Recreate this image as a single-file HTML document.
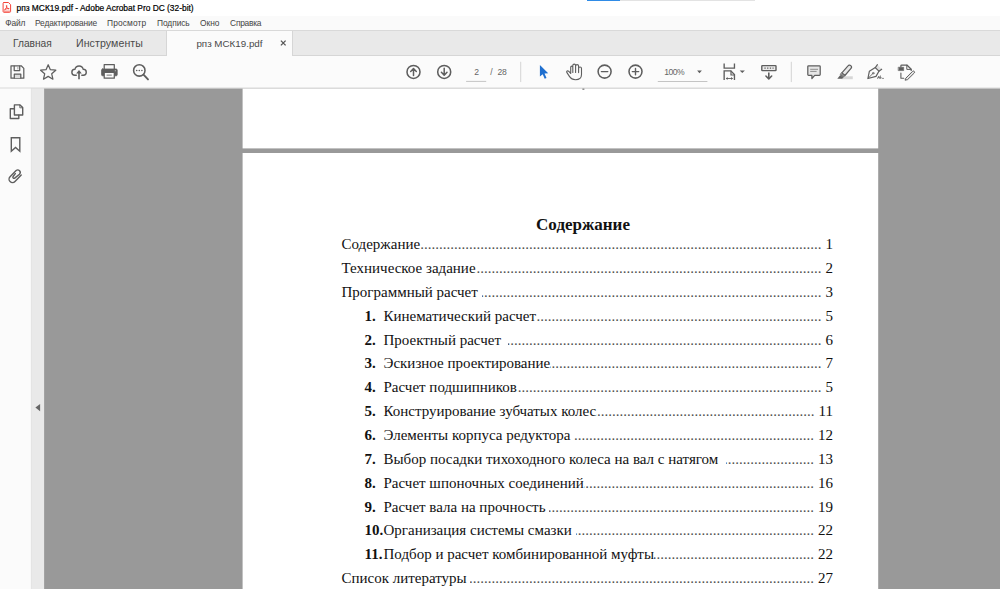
<!DOCTYPE html>
<html><head><meta charset="utf-8">
<style>
*{box-sizing:border-box;margin:0;padding:0}
html,body{width:1000px;height:589px;overflow:hidden;background:#fff}
body{position:relative;font-family:"Liberation Sans",sans-serif;color:#333}
.abs{position:absolute}
#title{left:0;top:0;width:1000px;height:16px;background:#fff}
#title .t{position:absolute;left:16.5px;top:0.9px;font-size:8.4px;line-height:14px;color:#000;white-space:nowrap;-webkit-text-stroke:0.2px #000}
#strip{left:587px;top:0;width:168px;height:1px;background:#e3e3e3}
#strip b{display:block;width:33px;height:1px;background:#2f8be6}
#menu{left:0;top:16px;width:1000px;height:14px;background:#fafafa}
#menu span{position:absolute;top:0px;font-size:8.4px;line-height:14px;color:#444;white-space:nowrap}
#tabs{left:0;top:30px;width:1000px;height:26px;background:#e9e9e9;border-top:1px solid #d9d9d9;border-bottom:1px solid #d6d6d6}
#tabs .act{position:absolute;left:166px;top:0;width:127px;height:25px;background:#fbfbfb;border-left:1px solid #d6d6d6;border-right:1px solid #d6d6d6}
#tabs span{position:absolute;top:6px;font-size:10.2px;line-height:12px;color:#4a4a4a;white-space:nowrap}
#tool{left:0;top:56px;width:1000px;height:32px;background:#fbfbfb}
#side{left:0;top:89px;width:31px;height:500px;background:#fbfbfb}
#sideb{left:31px;top:89px;width:1px;height:500px;background:#d4d4d4}
#strip2{left:32px;top:89px;width:12px;height:500px;background:#e9e9e9}
#doc{left:44px;top:89px;width:956px;height:500px;background:#999}
#p1{left:243px;top:89px;width:635px;height:60px;background:#fff}
#p2{left:243px;top:153px;width:635px;height:436px;background:#fff}
.serif{font-family:"Liberation Serif",serif;color:#111}
#h{left:536.1px;top:216.2px;font-weight:bold;font-size:17px;line-height:17px;white-space:nowrap}
.ln{position:absolute;white-space:pre;left:341.5px;width:491.5px;height:18px;font-size:15px;line-height:18px;display:flex}
.ln.i{left:364.5px;width:468.5px}
.ln b{display:inline-block;width:19px}
.ln .d{flex:1;overflow:hidden;direction:rtl;letter-spacing:0;color:#505050}
.ln .n{padding-left:4px}
.tt{font-size:8.6px;line-height:12px;color:#666;white-space:nowrap}
</style></head><body>
<div id="title" class="abs"><span class="t">рпз МСК19.pdf - Adobe Acrobat Pro DC (32-bit)</span></div>
<div id="strip" class="abs"><b></b></div>
<div id="menu" class="abs">
<span style="left:5.2px;letter-spacing:-0.1px">Файл</span><span style="left:35px;letter-spacing:-0.13px">Редактирование</span><span style="left:107.1px;letter-spacing:0.12px">Просмотр</span><span style="left:157px;letter-spacing:-0.07px">Подпись</span><span style="left:200px">Окно</span><span style="left:230.1px;letter-spacing:-0.25px">Справка</span>
</div>
<div id="tabs" class="abs"><div class="act"></div>
<span style="left:13px;top:6.67px;font-size:10.2px">Главная</span><span style="left:76px;top:5.7px;font-size:10.6px;letter-spacing:0.08px">Инструменты</span><span style="left:196.4px;top:6.8px;font-size:9.8px">рпз МСК19.pdf</span>
</div>
<div id="tool" class="abs"></div>
<svg class="abs" style="left:0;top:0" width="1000" height="589" viewBox="0 0 1000 589" shape-rendering="geometricPrecision">
<rect x="0" y="88" width="31" height="501" fill="#fbfbfb"/>
<rect x="30.9" y="88" width="0.9" height="501" fill="#dcdcdc"/>
<rect x="31.8" y="88" width="12.4" height="501" fill="#e9e9e9"/>
<rect x="0" y="87.5" width="1000" height="1" fill="#dadada"/>
<rect x="44.1" y="88.5" width="956" height="501" fill="#999"/>
<rect x="242.6" y="88.6" width="635.6" height="59.8" fill="#fff"/>
<rect x="242.6" y="153" width="635.6" height="436" fill="#fff"/>
</svg>
<div id="h" class="abs serif">Содержание</div>
<div id="toc" class="serif">
<div class="ln" style="top:234.90px"><span>Содержание</span><span class="d">........................................................................................................................................................................................................</span><span class="n">1</span></div>
<div class="ln" style="top:258.78px"><span>Техническое задание</span><span class="d">........................................................................................................................................................................................................</span><span class="n">2</span></div>
<div class="ln" style="top:282.66px"><span>Программный расчет </span><span class="d">........................................................................................................................................................................................................</span><span class="n">3</span></div>
<div class="ln i" style="top:306.54px"><b>1.</b><span>Кинематический расчет</span><span class="d">........................................................................................................................................................................................................</span><span class="n">5</span></div>
<div class="ln i" style="top:330.9px"><b>2.</b><span>Проектный расчет&nbsp;&nbsp;</span><span class="d">........................................................................................................................................................................................................</span><span class="n">6</span></div>
<div class="ln i" style="top:354.30px"><b>3.</b><span>Эскизное проектирование</span><span class="d">........................................................................................................................................................................................................</span><span class="n">7</span></div>
<div class="ln i" style="top:378.18px"><b>4.</b><span>Расчет подшипников</span><span class="d">........................................................................................................................................................................................................</span><span class="n">5</span></div>
<div class="ln i" style="top:402.06px"><b>5.</b><span>Конструирование зубчатых колес</span><span class="d">........................................................................................................................................................................................................</span><span class="n">11</span></div>
<div class="ln i" style="top:425.94px"><b>6.</b><span>Элементы корпуса редуктора </span><span class="d">........................................................................................................................................................................................................</span><span class="n">12</span></div>
<div class="ln i" style="top:449.82px"><b>7.</b><span>Выбор посадки тихоходного колеса на вал с натягом&nbsp;&nbsp;</span><span class="d">........................................................................................................................................................................................................</span><span class="n">13</span></div>
<div class="ln i" style="top:473.70px"><b>8.</b><span>Расчет шпоночных соединений</span><span class="d">........................................................................................................................................................................................................</span><span class="n">16</span></div>
<div class="ln i" style="top:497.58px"><b>9.</b><span>Расчет вала на прочность </span><span class="d">........................................................................................................................................................................................................</span><span class="n">19</span></div>
<div class="ln i" style="top:521.46px"><b>10.</b><span>Организация системы смазки </span><span class="d">........................................................................................................................................................................................................</span><span class="n">22</span></div>
<div class="ln i" style="top:545.34px"><b>11.</b><span>Подбор и расчет комбинированной муфты</span><span class="d">........................................................................................................................................................................................................</span><span class="n">22</span></div>
<div class="ln" style="top:569.22px"><span>Список литературы </span><span class="d">........................................................................................................................................................................................................</span><span class="n">27</span></div>
</div>

<svg class="abs" id="ic" style="left:0;top:0" width="1000" height="589" viewBox="0 0 1000 589" fill="none" stroke="#5e5e5e" stroke-width="1.25" stroke-linejoin="round" stroke-linecap="round">
<!-- pdf title icon -->
<path d="M4 2.5 H8.5 L10.6 4.7 V11.4 A0.9 0.9 0 0 1 9.7 12.3 H4 A0.9 0.9 0 0 1 3.1 11.4 V3.4 A0.9 0.9 0 0 1 4 2.5 Z" fill="#fff" stroke="#f4443a" stroke-width="1"/>
<path d="M3.6 10.6 H10.1 V11.8 H3.6Z" fill="#f7837b" stroke="none"/>
<path d="M4.8 9.6 C6.2 8.6 7 6.9 6.8 5.6 C6.5 4.9 6.1 5.7 6.5 6.7 C7 7.9 8 8.8 9 9 C9.5 9 9.2 8.4 8.3 8.5 C7.1 8.6 5.8 9 4.8 9.6Z" stroke="#f02d22" stroke-width="0.8"/>
<!-- save -->
<path d="M11 65.8 H21.2 L23.8 68.4 V78.2 H11 Z"/>
<path d="M14.2 66 V70.5 H19.7 V66"/>
<path d="M17.9 67.2 V69" stroke="#999" stroke-width="0.9"/>
<path d="M14.3 78 V74.2 H20.8 V78" fill="#dcdcdc"/>
<!-- star -->
<path d="M48.20 64.70 L50.37 69.71 L55.81 70.23 L51.72 73.84 L52.90 79.17 L48.20 76.40 L43.50 79.17 L44.68 73.84 L40.59 70.23 L46.03 69.71Z"/>
<!-- cloud upload -->
<path d="M76.3 75.3 H74.8 A3 3 0 0 1 74.9 69.3 A4.3 4.3 0 0 1 83.25 69.3 A3 3 0 0 1 83.3 75.3 H81.8" stroke-width="1.4"/>
<path d="M79 79.3 V72.6" stroke-width="1.6" stroke-linecap="butt"/><path d="M76.2 73.5 L79 70 L81.8 73.5Z" fill="#5e5e5e" stroke="none"/>
<!-- printer -->
<path d="M104.2 69 V64.6 H114.3 V69" />
<rect x="101.6" y="69" width="15.6" height="6.8" rx="1" fill="#5e5e5e" stroke-width="0.8"/>
<rect x="104.2" y="72.4" width="10.1" height="5.8" fill="#fbfbfb"/>
<rect x="106.6" y="74.4" width="5.2" height="1.6" fill="#aaa" stroke="none"/>
<circle cx="115.3" cy="70.7" r="0.55" fill="#ddd" stroke="none"/>
<!-- zoom -->
<circle cx="139.3" cy="70.4" r="5.7" stroke-width="1.55"/>
<path d="M143.5 74.7 L148 79.4" stroke-width="1.9"/>
<g fill="#5e5e5e" stroke="none"><circle cx="136.7" cy="70.5" r="0.8"/><circle cx="139.3" cy="70.5" r="0.8"/><circle cx="141.9" cy="70.5" r="0.8"/></g>
<!-- up / down -->
<circle cx="413.5" cy="71.9" r="6.5" stroke-width="1.55"/>
<path d="M413.5 75.6 V68.7 M410.7 71.5 L413.5 68.6 L416.3 71.5" stroke-width="1.5"/>
<circle cx="444.2" cy="71.9" r="6.5" stroke-width="1.55"/>
<path d="M444.2 68.2 V75.1 M441.4 72.3 L444.2 75.2 L447 72.3" stroke-width="1.5"/>
<!-- page underline, dividers -->
<path d="M466.5 81.4 H485.8" stroke="#c4c4c4" stroke-width="1"/>
<path d="M520.7 62.2 V81.7" stroke="#d4d4d4" stroke-width="1"/>
<path d="M791.3 62.2 V81.7" stroke="#d4d4d4" stroke-width="1"/>
<path d="M658.2 81.5 H707" stroke="#c4c4c4" stroke-width="1"/>
<!-- cursor -->
<path d="M539.9 64.9 V76.6 L542.7 74.2 L544.7 78.7 L546.5 77.9 L544.5 73.5 L548.2 73.3 Z" fill="#1f6fcf" stroke="none"/>
<!-- hand -->
<path d="M570.7 73.4 V67.2 A1.05 1.05 0 0 1 572.8 67.2 V72.4 M572.8 67 V65.5 A1.4 1.4 0 0 1 575.6 65.5 V72.4 M575.6 66.1 A1.5 1.5 0 0 1 578.6 66.1 V72.6 M578.6 68.5 A1.45 1.45 0 0 1 581.5 68.5 V74.5 C581.5 78 579 79.7 575.5 79.7 C572.5 79.7 570.8 78.6 569.4 76.4 L566.8 72.4 C566.2 71.2 567.6 70.4 568.6 71.2 L570.7 73.4" stroke-width="1.1"/>
<!-- minus plus -->
<circle cx="604.6" cy="71.6" r="6.5" stroke-width="1.55"/>
<path d="M601.4 71.6 H607.8" stroke-width="1.4"/>
<circle cx="635.5" cy="71.6" r="6.5" stroke-width="1.55"/>
<path d="M632.3 71.6 H638.7 M635.5 68.4 V74.8" stroke-width="1.4"/>
<!-- dropdown tri -->
<path d="M697.1 70.6 H701.9 L699.5 73.3Z" fill="#5e5e5e" stroke="none"/>
<path d="M739.7 70.5 H744.9 L742.3 73.1Z" fill="#5e5e5e" stroke="none"/>
<!-- fit -->
<path d="M724.15 63.6 V68.15 H734.45 V63.6" stroke-linejoin="miter" stroke-linecap="butt" stroke-width="1.35"/>
<path d="M724.15 80 V70.9 H730.8 L734.45 74.6 V80" stroke-linejoin="miter" stroke-linecap="butt" stroke-width="1.35"/>
<path d="M731 71.2 V75 H734.5" stroke-width="1.2"/>
<path d="M726.6 78.5 H732.2" stroke-width="0.9"/><path d="M725.8 78.5 L727.6 77 V80Z M732.9 78.5 L731.1 77 V80Z" fill="#5e5e5e" stroke="none"/>
<!-- keyboard scroll -->
<rect x="761.8" y="65.6" width="14.2" height="5" rx="0.6" stroke-width="1.4" fill="#ebebeb"/>
<path d="M764.4 68.1 H773.6" stroke-width="1.1" stroke-dasharray="1.3 1.4" stroke-linecap="butt"/>
<path d="M768.8 72.4 V78.6" stroke-width="1.6" stroke-linecap="butt"/><path d="M765.9 76 L768.8 78.9 L771.7 76" stroke-width="1.5"/>
<!-- comment -->
<path d="M808.6 65.75 H819.4 A0.8 0.8 0 0 1 820.2 66.55 V74.6 A0.8 0.8 0 0 1 819.4 75.4 H814.7 L811.9 78.5 V75.4 H808.6 A0.8 0.8 0 0 1 807.8 74.6 V66.55 A0.8 0.8 0 0 1 808.6 65.75 Z" fill="#e6e6e6"/>
<path d="M810.2 69.3 H818 M810.2 71.4 H816.6" stroke-width="0.8" stroke="#777" stroke-linecap="butt"/>
<!-- highlighter -->
<rect x="841.4" y="76.3" width="11.4" height="2.9" fill="#d6d6d6" stroke="none"/>
<path d="M841.9 72.9 L848 65.9 A1.95 1.95 0 0 1 851 68.4 L844.9 75.5 Z" fill="#e8e8e8" stroke-width="1.2"/>
<path d="M841.9 72.9 L844.9 75.5 L843.4 77.2 L840.5 74.6 Z" fill="#8a8a8a" stroke-width="0.8"/><path d="M840.3 75 L843.2 77.5 L842.2 78.7 L837.3 78.8 Z" fill="#5e5e5e" stroke="none"/>
<!-- sign -->
<path d="M877.4 64.6 L881.7 69.2 L878.9 71.2 L875.3 67.6Z" fill="#e0e0e0" stroke="none"/>
<path d="M867.9 78.5 L869.4 71.2 L875.3 67.6 L878.9 71.2 L876 76.4 Z" stroke-width="1.2"/>
<path d="M868.1 78.3 L872.7 73.7" stroke-width="0.9"/>
<circle cx="873.2" cy="73.2" r="0.8" stroke-width="0.8"/>
<path d="M875.3 67.6 L877.4 64.6 M878.9 71.2 L881.7 69.2" stroke-width="1.1"/>
<path d="M877.6 78.6 L878.8 76 L879.6 78.4 M878 77.6 H879.4 M880.4 75.8 V78.4 C881.6 78.8 882 77 880.6 77.2 M882.4 78.4 H883.6" stroke-width="0.7"/>
<!-- stamp / fill -->
<path d="M900.9 66.6 V65.8 A0.8 0.8 0 0 1 901.7 65 H906.9 L911.2 69.3 V70.4" />
<path d="M906.8 65.2 V69.4 H911" stroke-width="1"/>
<rect x="898.5" y="67.2" width="5.2" height="3.4" fill="#5e5e5e" stroke-width="0.5"/>
<path d="M900.9 73 V78.2 H903.8" stroke-width="1.1"/>
<path d="M906 78 L912.5 71.4 A1.2 1.2 0 0 1 914.2 73.1 L907.6 79.6 L905.4 80.1 Z" fill="#e4e4e4" stroke-width="1"/>
<!-- sidebar: pages -->
<path d="M14.4 115 V104.9 H20 L22.7 107.6 V115 Z" stroke-width="1.4"/>
<path d="M19.8 105.1 V107.8 H22.5" stroke-width="0.9"/>
<path d="M14.2 108.8 H10.3 V118.5 H18.8 V115.2" stroke-width="1.4"/>
<!-- bookmark -->
<path d="M11.3 137.7 H19.8 V151.2 L15.55 147.4 L11.3 151.2 Z" stroke-linejoin="miter" stroke-width="1.4"/>
<!-- paperclip -->
<path d="M21.23 175.02 L14.98 181.50 A3.45 3.45 0 0 1 10.05 176.67 L16.12 170.54 A2.5 2.5 0 0 1 19.47 174.24 L14.72 178.09 A1.15 1.15 0 0 1 13.10 176.48 L15.34 173.67" stroke-width="1.4"/>
<!-- collapse arrow -->
<path d="M35.4 407.6 L40.1 403.9 V411.3 Z" fill="#666" stroke="none"/>
<!-- tab close -->
<path d="M280.9 40.6 L285.6 45.4 M285.6 40.6 L280.9 45.4" stroke="#555" stroke-width="1.3" stroke-linecap="butt"/>
<!-- tiny page text mark -->
<rect x="582.4" y="88.6" width="2" height="1.2" fill="#777" stroke="none"/>
</svg>

<div class="abs tt" style="left:474.2px;top:66.4px">2</div>
<div class="abs tt" style="left:490.2px;top:66.4px">/</div>
<div class="abs tt" style="left:497.6px;top:66.4px;letter-spacing:-0.3px">28</div>
<div class="abs tt" style="left:664.2px;top:65.9px;letter-spacing:-0.55px">100%</div>
</body></html>
